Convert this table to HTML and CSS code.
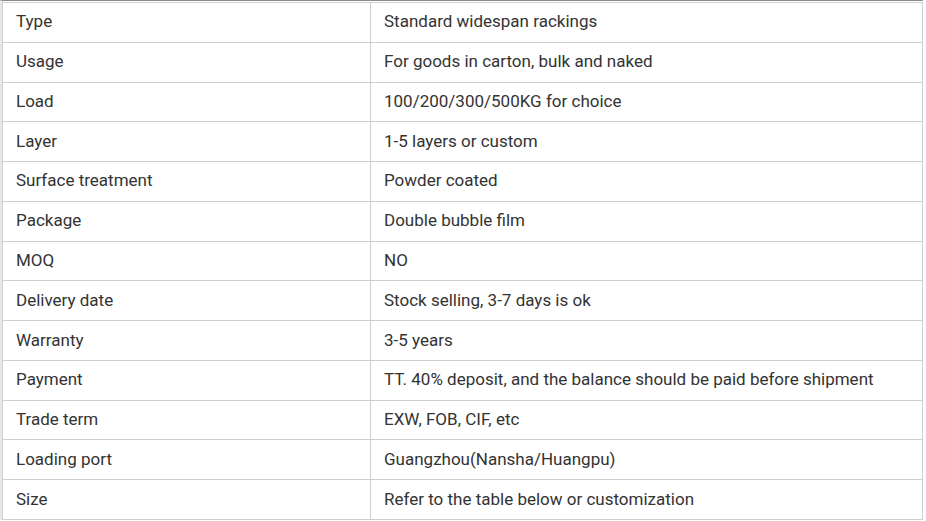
FILE: index.html
```html
<!DOCTYPE html>
<html>
<head>
<meta charset="utf-8">
<link rel="stylesheet" href="styles.css">
</head>
<body>
<div class="wrap">
<table class="spec">
<tbody>
<tr><td class="k">Type</td><td>Standard widespan rackings</td></tr>
<tr><td class="k">Usage</td><td>For goods in carton, bulk and naked</td></tr>
<tr><td class="k">Load</td><td>100/200/300/500KG for choice</td></tr>
<tr><td class="k">Layer</td><td>1-5 layers or custom</td></tr>
<tr><td class="k">Surface treatment</td><td>Powder coated</td></tr>
<tr><td class="k">Package</td><td>Double bubble film</td></tr>
<tr><td class="k">MOQ</td><td>NO</td></tr>
<tr><td class="k">Delivery date</td><td>Stock selling, 3-7 days is ok</td></tr>
<tr><td class="k">Warranty</td><td>3-5 years</td></tr>
<tr><td class="k">Payment</td><td>TT. 40% deposit, and the balance should be paid before shipment</td></tr>
<tr><td class="k">Trade term</td><td>EXW, FOB, CIF, etc</td></tr>
<tr><td class="k">Loading port</td><td>Guangzhou(Nansha/Huangpu)</td></tr>
<tr><td class="k">Size</td><td>Refer to the table below or customization</td></tr>
</tbody>
</table>
</div>
</body>
</html>
```
FILE: styles.css
```css
html, body {
  margin: 0;
  padding: 0;
  background: #fff;
}
.wrap {
  border-top: 1px solid #8a8a8a;
  border-left: 2px solid #e6e6e6;
  padding-top: 1px;
  width: 921px;
}
.spec {
  border-collapse: collapse;
  width: 921px;
  font-family: Roboto, "Liberation Sans", sans-serif;
  font-size: 17px;
  color: #333;
}
.spec td {
  border: 1px solid #cfcfcf;
  height: 39.77px;
  box-sizing: border-box;
  padding: 0 13px 2px;
  line-height: 20px;
  vertical-align: middle;
}
.spec td.k {
  width: 368px;
}
```
